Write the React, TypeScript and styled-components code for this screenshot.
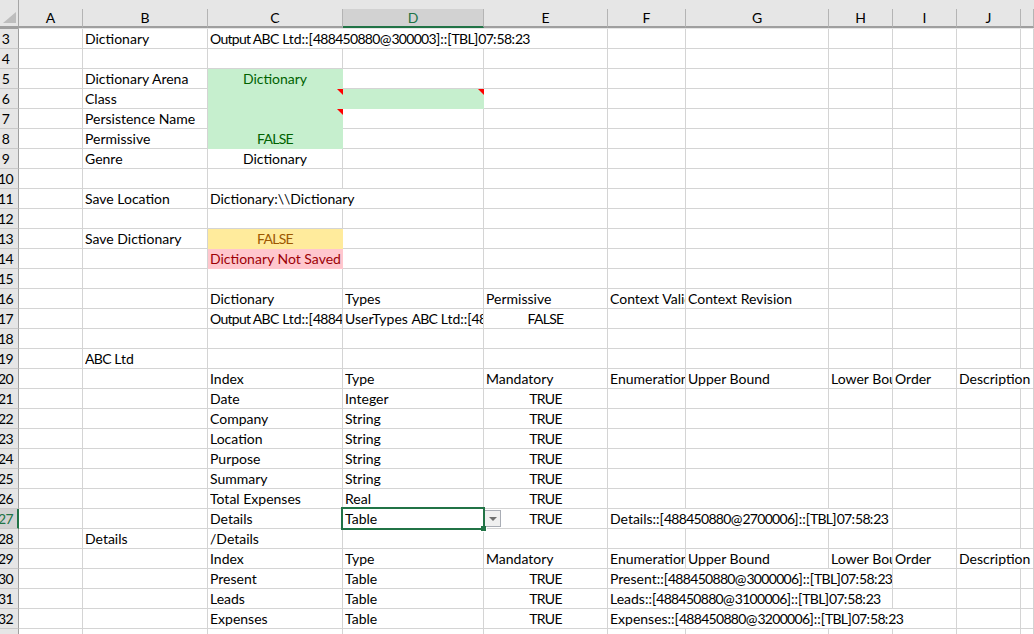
import React from "react";
import styled, { createGlobalStyle } from "styled-components";

const COLUMNS = ["A", "B", "C", "D", "E", "F", "G", "H", "I", "J", "K"];
const TEMPLATE = "19px 64px 125px 135px 141px 124px 78px 143px 64px 64px 64px 1fr";

type Tone = "good" | "warn" | "bad";
type CellData = {
  text?: string;
  center?: boolean;
  tone?: Tone;
  span?: number;
  comment?: boolean;
  selected?: boolean;
};
type RowData = { id: number; cells: Record<string, CellData | string> };

const T = (text: string): CellData => ({ text, center: true });

const headings = {
  C: "Index",
  D: "Type",
  E: "Mandatory",
  F: "Enumeration",
  G: "Upper Bound",
  H: "Lower Bound",
  I: "Order",
  J: { text: "Description", span: 2 },
};

const rows: RowData[] = [
  { id: 3, cells: { B: "Dictionary", C: { text: "Output ABC Ltd::[488450880@300003]::[TBL]07:58:23", span: 3 } } },
  { id: 4, cells: {} },
  { id: 5, cells: { B: "Dictionary Arena", C: { text: "Dictionary", center: true, tone: "good" } } },
  { id: 6, cells: { B: "Class", C: { tone: "good", comment: true }, D: { tone: "good", comment: true } } },
  { id: 7, cells: { B: "Persistence Name", C: { tone: "good", comment: true } } },
  { id: 8, cells: { B: "Permissive", C: { text: "FALSE", center: true, tone: "good" } } },
  { id: 9, cells: { B: "Genre", C: T("Dictionary") } },
  { id: 10, cells: {} },
  { id: 11, cells: { B: "Save Location", C: { text: "Dictionary:\\\\Dictionary", span: 2 } } },
  { id: 12, cells: {} },
  { id: 13, cells: { B: "Save Dictionary", C: { text: "FALSE", center: true, tone: "warn" } } },
  { id: 14, cells: { C: { text: "Dictionary Not Saved", tone: "bad" } } },
  { id: 15, cells: {} },
  { id: 16, cells: { C: "Dictionary", D: "Types", E: "Permissive", F: "Context Validation", G: "Context Revision" } },
  { id: 17, cells: { C: "Output ABC Ltd::[488450880@300003]", D: "UserTypes ABC Ltd::[488450880", E: T("FALSE") } },
  { id: 18, cells: {} },
  { id: 19, cells: { B: "ABC Ltd" } },
  { id: 20, cells: headings },
  { id: 21, cells: { C: "Date", D: "Integer", E: T("TRUE") } },
  { id: 22, cells: { C: "Company", D: "String", E: T("TRUE") } },
  { id: 23, cells: { C: "Location", D: "String", E: T("TRUE") } },
  { id: 24, cells: { C: "Purpose", D: "String", E: T("TRUE") } },
  { id: 25, cells: { C: "Summary", D: "String", E: T("TRUE") } },
  { id: 26, cells: { C: "Total Expenses", D: "Real", E: T("TRUE") } },
  { id: 27, cells: { C: "Details", D: { text: "Table", selected: true }, E: T("TRUE"), F: { text: "Details::[488450880@2700006]::[TBL]07:58:23", span: 3 } } },
  { id: 28, cells: { B: "Details", C: "/Details" } },
  { id: 29, cells: headings },
  { id: 30, cells: { C: "Present", D: "Table", E: T("TRUE"), F: { text: "Present::[488450880@3000006]::[TBL]07:58:23", span: 3 } } },
  { id: 31, cells: { C: "Leads", D: "Table", E: T("TRUE"), F: { text: "Leads::[488450880@3100006]::[TBL]07:58:23", span: 3 } } },
  { id: 32, cells: { C: "Expenses", D: "Table", E: T("TRUE"), F: { text: "Expenses::[488450880@3200006]::[TBL]07:58:23", span: 4 } } },
  { id: 33, cells: { C: "Approvals" } },
];

const toneColors: Record<Tone, { bg: string; fg: string }> = {
  good: { bg: "#c6efce", fg: "#006100" },
  warn: { bg: "#ffeb9c", fg: "#9c5700" },
  bad: { bg: "#ffc7ce", fg: "#9c0006" },
};

const GlobalStyle = createGlobalStyle`
  html, body {
    margin: 0;
    height: 100%;
    overflow: hidden;
    background: #fff;
  }
`;

const Sheet = styled.div`
  height: 634px;
  overflow: hidden;
  font-family: "Lato", "Liberation Sans", sans-serif;
  font-size: 14px;
  color: #000;
`;

const HeaderRow = styled.div`
  display: grid;
  grid-template-columns: ${TEMPLATE};
  height: 29px;
  background: #e6e6e6;
  padding-top: 9px;
  box-sizing: border-box;
`;

const Corner = styled.div`
  display: flex;
  align-items: flex-end;
  justify-content: flex-end;
  margin-top: -9px;
  border-right: 1px solid #a6a6a6;
  border-bottom: 2px solid #9f9f9f;
  padding: 0 2px 3px 0;
`;

const ColumnHead = styled.div<{ $active?: boolean }>`
  display: flex;
  align-items: center;
  justify-content: center;
  border-right: 1px solid #b4b4b4;
  border-bottom: 2px solid ${(p) => (p.$active ? "#217346" : "#9f9f9f")};
  background: ${(p) => (p.$active ? "#d2d2d2" : "transparent")};
  color: ${(p) => (p.$active ? "#217346" : "#000")};
`;

const Row = styled.div`
  display: grid;
  grid-template-columns: ${TEMPLATE};
  height: 20px;
`;

const RowHead = styled.div<{ $active?: boolean }>`
  display: flex;
  align-items: center;
  justify-content: center;
  box-sizing: border-box;
  padding-right: ${(p) => (p.$active ? "6px" : "7px")};
  background: ${(p) => (p.$active ? "#d2d2d2" : "#e6e6e6")};
  color: ${(p) => (p.$active ? "#217346" : "#000")};
  border-right: ${(p) => (p.$active ? "2px solid #217346" : "1px solid #9f9f9f")};
  border-bottom: 1px solid #c8c8c8;
  overflow: hidden;
  letter-spacing: -0.5px;
`;

const Cell = styled.div<{ $tone?: Tone; $center?: boolean; $span?: number }>`
  position: relative;
  grid-column: span ${(p) => p.$span ?? 1};
  box-sizing: border-box;
  min-width: 0;
  padding: 1px ${(p) => (p.$center ? "2px" : "0")} 0 2px;
  line-height: 18px;
  white-space: nowrap;
  text-align: ${(p) => (p.$center ? "center" : "left")};
  background: ${(p) => (p.$tone ? toneColors[p.$tone].bg : "#fff")};
  color: ${(p) => (p.$tone ? toneColors[p.$tone].fg : "#000")};
  border-right: 1px solid ${(p) => (p.$tone ? toneColors[p.$tone].bg : "#d4d4d4")};
  border-bottom: 1px solid ${(p) => (p.$tone ? toneColors[p.$tone].bg : "#d4d4d4")};
`;

const CellText = styled.div`
  overflow: hidden;
`;

/* digits and capitals run wider in Lato than in the sheet's font */
const Narrow = styled.span`
  letter-spacing: -0.7px;
`;

const CommentMark = styled.span`
  position: absolute;
  z-index: 1;
  top: 0;
  right: -1px;
  width: 0;
  height: 0;
  border-top: 6px solid #ff0000;
  border-left: 6px solid transparent;
`;

const Selection = styled.div`
  position: absolute;
  z-index: 3;
  top: -2px;
  left: -2px;
  width: 144px;
  height: 23px;
  box-sizing: border-box;
  border: 2px solid #217346;
  pointer-events: none;
`;

const FillHandle = styled.span`
  position: absolute;
  right: -3px;
  bottom: -3px;
  width: 5px;
  height: 5px;
  background: #217346;
  box-shadow: 1px 1px 0 #fff;
`;

const DropButton = styled.div`
  position: absolute;
  z-index: 2;
  top: 1px;
  left: 141px;
  display: flex;
  align-items: center;
  justify-content: center;
  width: 17px;
  height: 17px;
  box-sizing: border-box;
  background: #f0f0f0;
  border: 1px solid #a9adb5;
`;

const DropArrow = styled.span`
  width: 0;
  height: 0;
  margin-top: 1px;
  border-top: 4px solid #6f6f6f;
  border-left: 4px solid transparent;
  border-right: 4px solid transparent;
`;

function renderText(text?: string) {
  if (!text) return null;
  return text
    .split(/(\d+|Output ABC|[A-Z]{3,})/)
    .map((part, i) => (i % 2 ? <Narrow key={i}>{part}</Narrow> : part));
}

function SheetCell({ data }: { data: CellData }) {
  return (
    <Cell $tone={data.tone} $center={data.center} $span={data.span}>
      <CellText>{renderText(data.text)}</CellText>
      {data.comment && <CommentMark />}
      {data.selected && (
        <>
          <Selection>
            <FillHandle />
          </Selection>
          <DropButton>
            <DropArrow />
          </DropButton>
        </>
      )}
    </Cell>
  );
}

function SheetRow({ row }: { row: RowData }) {
  const out: React.ReactNode[] = [];
  let skip = 0;
  COLUMNS.forEach((col) => {
    if (skip > 0) {
      skip--;
      return;
    }
    const raw = row.cells[col];
    const data: CellData = typeof raw === "string" ? { text: raw } : raw ?? {};
    skip = (data.span ?? 1) - 1;
    out.push(<SheetCell key={col} data={data} />);
  });
  return (
    <Row>
      <RowHead $active={row.id === 27}>{row.id}</RowHead>
      {out}
    </Row>
  );
}

export default function App() {
  return (
    <Sheet>
      <GlobalStyle />
      <HeaderRow>
        <Corner>
          <svg width="13" height="11" viewBox="0 0 13 11">
            <path d="M0 11 L13 0 L13 11 Z" fill="#bdbdbd" />
          </svg>
        </Corner>
        {COLUMNS.map((col) => (
          <ColumnHead key={col} $active={col === "D"}>
            {col === "K" ? "" : col}
          </ColumnHead>
        ))}
        <ColumnHead />
      </HeaderRow>
      {rows.map((row) => (
        <SheetRow key={row.id} row={row} />
      ))}
    </Sheet>
  );
}
